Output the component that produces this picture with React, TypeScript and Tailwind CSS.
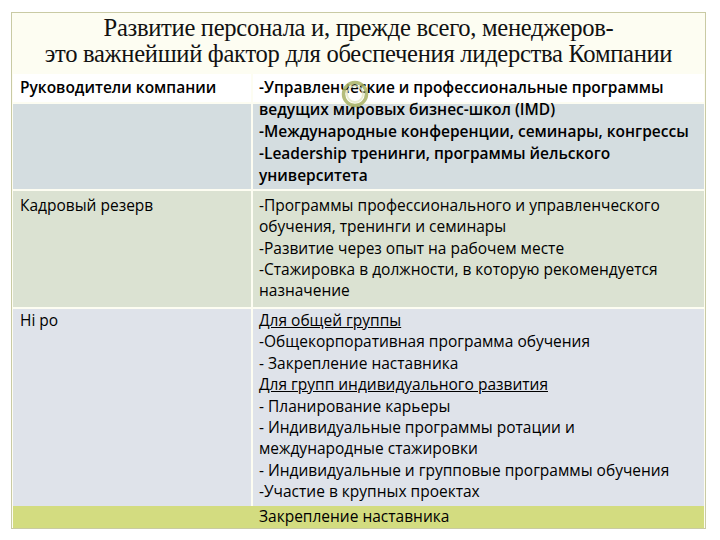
const FONT = "font-['Open_Sans','Noto_Sans',sans-serif]";

function Cell({ children, className = "" }: { children?: React.ReactNode; className?: string }) {
  return <div className={`text-[15.5px] text-black whitespace-nowrap ${className}`}>{children}</div>;
}

export default function App() {
  return (
    <div className={`w-[720px] h-[540px] bg-white pt-[12px] pl-[11px] ${FONT}`}>
      <div className="relative w-[695px] h-[517px] border border-[#c9caa4] bg-[#fdfdf2] flex flex-col">
        <div className="h-[61px] pb-[5px] flex flex-col items-center justify-center font-['Liberation_Serif',serif] text-[24.6px] leading-[26px] text-[#111] tracking-[-0.3px]">
          <div>Развитие персонала и, прежде всего, менеджеров-</div>
          <div>это важнейший фактор для обеспечения лидерства Компании</div>
        </div>

        <div className="flex-1 flex flex-col gap-[2px] px-[1px]">
          {/* Руководители */}
          <div className="grid grid-cols-[238px_1fr] gap-[2px] h-[115px] bg-[#fdfdf2]">
            <Cell className="pl-[7px] pt-[2px] leading-[22px] font-semibold bg-[linear-gradient(to_bottom,#ffffff_28px,#fdfdf2_28px,#fdfdf2_30px,#d4dde0_30px)]">
              Руководители компании
            </Cell>
            <Cell className="pl-[6px] pt-[2px] leading-[22px] font-semibold bg-[linear-gradient(to_bottom,#ffffff_28px,#fdfdf2_28px,#fdfdf2_30px,#d4dde0_30px)]">
              <div>-Управленческие и профессиональные программы</div>
              <div>ведущих мировых бизнес-школ (IMD)</div>
              <div>-Международные конференции, семинары, конгрессы</div>
              <div>-Leadership тренинги, программы йельского</div>
              <div>университета</div>
            </Cell>
          </div>

          {/* Кадровый резерв */}
          <div className="grid grid-cols-[238px_1fr] gap-[2px] h-[116px]">
            <Cell className="pl-[7px] pt-[4px] leading-[21.3px] bg-[#dbe2d2]">Кадровый резерв</Cell>
            <Cell className="pl-[6px] pt-[4px] leading-[21.3px] bg-[#dbe2d2]">
              <div>-Программы профессионального и управленческого</div>
              <div>обучения, тренинги и семинары</div>
              <div>-Развитие через опыт на рабочем месте</div>
              <div>-Стажировка в должности, в которую рекомендуется</div>
              <div>назначение</div>
            </Cell>
          </div>

          {/* Hi po */}
          <div className="grid grid-cols-[238px_1fr] gap-x-[2px] flex-1">
            <Cell className="pl-[7px] pt-[1px] leading-[21.4px] bg-[#dfe3ea]">Hi po</Cell>
            <Cell className="pl-[6px] pt-[1px] leading-[21.4px] bg-[#dfe3ea]">
              <div className="underline">Для общей группы</div>
              <div>-Общекорпоративная программа обучения</div>
              <div>- Закрепление наставника</div>
              <div className="underline">Для групп индивидуального развития</div>
              <div>- Планирование карьеры</div>
              <div>- Индивидуальные программы ротации и</div>
              <div>международные стажировки</div>
              <div>- Индивидуальные и групповые программы обучения</div>
              <div>-Участие в крупных проектах</div>
            </Cell>
          </div>
          <div className="grid grid-cols-[240px_1fr] h-[22px] -mt-[2px] bg-[#d3dc80]">
            <div />
            <Cell className="pl-[6px] leading-[21px]">Закрепление наставника</Cell>
          </div>
        </div>

        <svg className="absolute left-[323px] top-[61px]" width="40" height="40" viewBox="0 0 40 40">
          <circle cx="20" cy="20" r="11.5" fill="none" stroke="#a8b264" strokeOpacity="0.85" strokeWidth="3.5" />
          <circle cx="20" cy="20" r="8" fill="none" stroke="#e4e8c4" strokeOpacity="0.8" strokeWidth="2" />
        </svg>
      </div>
    </div>
  );
}
